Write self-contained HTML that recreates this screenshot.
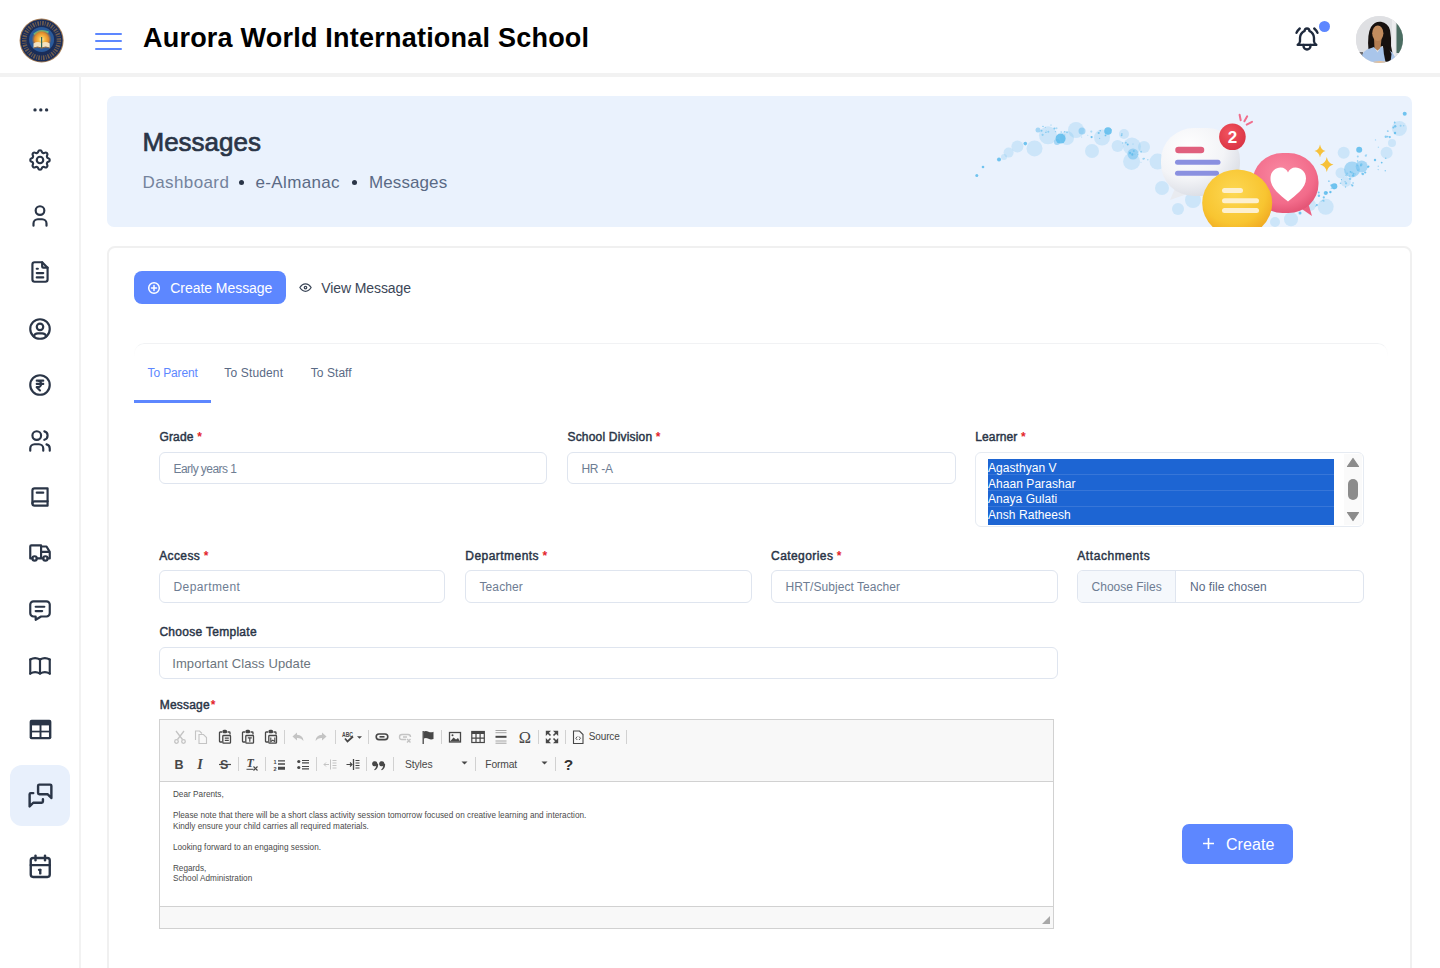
<!DOCTYPE html>
<html><head><meta charset="utf-8">
<style>
*{box-sizing:border-box;margin:0;padding:0}
html,body{width:1440px;height:968px;overflow:hidden;background:#fff;font-family:"Liberation Sans",sans-serif;color:#2a3547}
.abs{position:absolute}
#hdr{position:absolute;left:0;top:0;width:1440px;height:77px;background:#fff;border-bottom:4px solid #f2f2f2}
#side{position:absolute;left:0;top:77px;width:81px;height:891px;background:#fff;border-right:2px solid #f2f2f2}
.ic{position:absolute;left:28px;width:24px;height:24px}
.ic svg{display:block}
#banner{position:absolute;left:107px;top:96px;width:1305px;height:131px;background:#eaf2fd;border-radius:7px;overflow:hidden}
#card{position:absolute;left:107px;top:246px;width:1305px;height:760px;border:2px solid #f0f0f0;border-radius:8px;background:#fff}
.lbl{position:absolute;font-size:12px;font-weight:700;color:#2a3547;white-space:nowrap}
.t i{font-style:normal;color:#e3242b;margin-left:3px}
.inp{position:absolute;height:32px;border:1px solid #dfe5ef;border-radius:6px;background:#fff;font-size:12px;color:#6e7d93;padding-left:13px;line-height:30px;white-space:nowrap}
.t{position:absolute;white-space:nowrap}
</style></head><body>

<div id="hdr">
  <!-- logo -->
  <svg class="abs" style="left:19px;top:18px" width="46" height="46" viewBox="0 0 46 46">
    <defs>
      <radialGradient id="sun" cx="50%" cy="55%" r="50%">
        <stop offset="0" stop-color="#fff0c0"/>
        <stop offset="0.3" stop-color="#f9c04a"/>
        <stop offset="0.7" stop-color="#e08a2a"/>
        <stop offset="1" stop-color="#c0702a" stop-opacity="0"/>
      </radialGradient>
    </defs>
    <circle cx="22.6" cy="22.5" r="22" fill="#a27b55"/>
    <circle cx="22.6" cy="22.5" r="21" fill="#1a2d58"/>
    <circle cx="22.6" cy="22.5" r="17.3" fill="none" stroke="#86694c" stroke-width="4.5" stroke-dasharray="1.6 1.1 0.8 1.3" opacity=".8"/>
    <circle cx="22.6" cy="21.5" r="12.5" fill="#2a5a9a"/>
    <path d="M15 16.5 Q21 10.5 29.5 14.5" fill="none" stroke="#46c49a" stroke-width="2"/>
    <circle cx="22.6" cy="20.5" r="10" fill="url(#sun)"/>
    <path d="M14.5 25.5 Q18.5 23 22.6 25 Q26.7 23 30.7 25.5 L30.7 30 Q26.7 28 22.6 30 Q18.5 28 14.5 30Z" fill="#f3e2bf"/>
    <path d="M22.6 19v11" stroke="#2d6a5a" stroke-width="1.2"/>
    <path d="M14.5 30 Q18.5 28 22.6 30 Q26.7 28 30.7 30" fill="none" stroke="#8a6a4a" stroke-width="1"/>
  </svg>
  <!-- hamburger -->
  <div class="abs" style="left:95px;top:33px;width:27px;height:2px;background:#5d87ff;border-radius:1px"></div>
  <div class="abs" style="left:95px;top:40.4px;width:27px;height:2px;background:#5d87ff;border-radius:1px"></div>
  <div class="abs" style="left:95px;top:48.2px;width:27px;height:2px;background:#5d87ff;border-radius:1px"></div>
  <div class="t" style="left:143px;top:23px;font-size:27px;font-weight:700;color:#000;letter-spacing:0.22px;line-height:30px">Aurora World International School</div>
  <!-- bell -->
  <svg class="abs" style="left:1293px;top:25px" width="28" height="28" viewBox="0 0 24 24" fill="none" stroke="#1f2a3d" stroke-width="2" stroke-linecap="round" stroke-linejoin="round">
    <path d="M10 5a2 2 0 1 1 4 0a7 7 0 0 1 4 6v3a4 4 0 0 0 2 3h-16a4 4 0 0 0 2-3v-3a7 7 0 0 1 4-6"/>
    <path d="M9 17v1a3 3 0 0 0 6 0v-1"/>
    <path d="M21 6.727a11.05 11.05 0 0 0-2.794-3.727"/>
    <path d="M3 6.727a11.05 11.05 0 0 1 2.792-3.727"/>
  </svg>
  <div class="abs" style="left:1319px;top:21px;width:11px;height:11px;border-radius:50%;background:#5d87ff"></div>
  <!-- avatar -->
  <div class="abs" style="left:1355.5px;top:16px;width:47.5px;height:47px;border-radius:50%;overflow:hidden;background:#dfe0e3">
    <svg width="48" height="48" viewBox="0 0 48 48">
      <rect x="0" y="0" width="48" height="48" fill="#dfe0e3"/>
      <rect x="36" y="0" width="3.5" height="48" fill="#ececee"/>
      <rect x="40.5" y="7" width="8" height="30" fill="#4b6d62"/>
      <rect x="0" y="36" width="7" height="7" fill="#6d6d70"/>
      <path d="M12.5 34 Q11 18 15 11 Q19 5 25 5.8 Q32 7 34 14 Q35.5 22 35 30 Q37 36 36 42 L29 44 L27 30 Z" fill="#17110f"/>
      <path d="M18 23 L25.5 23 L24.5 32 L21.5 34.5 L18.5 32Z" fill="#b37d52"/>
      <path d="M4 48 Q5 37 11 33.5 L18 31 L21.5 36.5 L25 31 L29 32 Q38 34 41.5 48Z" fill="#a9c5ea"/>
      <path d="M27 29 Q33 30 35.5 38 L34.5 46 L29.5 46 Q27.5 38 27 29Z" fill="#17110f"/>
      <ellipse cx="21.8" cy="17.3" rx="5.6" ry="7.8" fill="#c28c5e"/>
      <path d="M14 46.5 Q24 43.5 34 46.5 V48 H14Z" fill="#e6c19a"/>
    </svg>
  </div>
</div>

<div id="side"></div>
<div id="sideicons">
<div class="abs" style="left:10px;top:765px;width:60px;height:61px;border-radius:12px;background:#e8f0fc"></div>
<svg class="abs" style="left:27px;top:96.6px" width="26" height="26" viewBox="0 0 24 24" fill="none" stroke="#2a3547" stroke-width="2" stroke-linecap="round" stroke-linejoin="round"><g fill="#2a3547" stroke="none"><circle cx="7.4" cy="11.9" r="1.55"/><circle cx="12.75" cy="11.9" r="1.55"/><circle cx="18.1" cy="11.9" r="1.55"/></g></svg>
<svg class="abs" style="left:27px;top:146.5px" width="26" height="26" viewBox="0 0 24 24" fill="none" stroke="#2a3547" stroke-width="2" stroke-linecap="round" stroke-linejoin="round"><path d="M10.325 4.317c.426 -1.756 2.924 -1.756 3.35 0a1.724 1.724 0 0 0 2.573 1.066c1.543 -.94 3.31 .826 2.37 2.37a1.724 1.724 0 0 0 1.065 2.572c1.756 .426 1.756 2.924 0 3.35a1.724 1.724 0 0 0 -1.066 2.573c.94 1.543 -.826 3.31 -2.37 2.37a1.724 1.724 0 0 0 -2.572 1.065c-.426 1.756 -2.924 1.756 -3.35 0a1.724 1.724 0 0 0 -2.573 -1.066c-1.543 .94 -3.31 -.826 -2.37 -2.37a1.724 1.724 0 0 0 -1.065 -2.572c-1.756 -.426 -1.756 -2.924 0 -3.35a1.724 1.724 0 0 0 1.066 -2.573c-.94 -1.543 .826 -3.31 2.37 -2.37c1 .608 2.296 .07 2.572 -1.065z"/><circle cx="12" cy="12" r="3"/></svg>
<svg class="abs" style="left:27px;top:203.0px" width="26" height="26" viewBox="0 0 24 24" fill="none" stroke="#2a3547" stroke-width="2" stroke-linecap="round" stroke-linejoin="round"><path d="M8 7a4 4 0 1 0 8 0a4 4 0 0 0 -8 0"/><path d="M6 21v-2a4 4 0 0 1 4 -4h4a4 4 0 0 1 4 4v2"/></svg>
<svg class="abs" style="left:27px;top:259.0px" width="26" height="26" viewBox="0 0 24 24" fill="none" stroke="#2a3547" stroke-width="2" stroke-linecap="round" stroke-linejoin="round"><path d="M14 3v4a1 1 0 0 0 1 1h4"/><path d="M17 21h-10a2 2 0 0 1 -2 -2v-14a2 2 0 0 1 2 -2h7l5 5v11a2 2 0 0 1 -2 2z"/><path d="M9 9l1 0"/><path d="M9 13l6 0"/><path d="M9 17l6 0"/></svg>
<svg class="abs" style="left:27px;top:315.5px" width="26" height="26" viewBox="0 0 24 24" fill="none" stroke="#2a3547" stroke-width="2" stroke-linecap="round" stroke-linejoin="round"><circle cx="12" cy="12" r="9"/><circle cx="12" cy="10" r="3"/><path d="M6.168 18.849a4 4 0 0 1 3.832 -2.849h4a4 4 0 0 1 3.834 2.855"/></svg>
<svg class="abs" style="left:27px;top:372.0px" width="26" height="26" viewBox="0 0 24 24" fill="none" stroke="#2a3547" stroke-width="2" stroke-linecap="round" stroke-linejoin="round"><circle cx="12" cy="12" r="9"/><path d="M15 8h-6h1a3 3 0 0 1 0 6h-1l3 3"/><path d="M9 11h6"/></svg>
<svg class="abs" style="left:27px;top:428.0px" width="26" height="26" viewBox="0 0 24 24" fill="none" stroke="#2a3547" stroke-width="2" stroke-linecap="round" stroke-linejoin="round"><path d="M5 7a4 4 0 1 0 8 0a4 4 0 1 0 -8 0"/><path d="M3 21v-2a4 4 0 0 1 4 -4h4a4 4 0 0 1 4 4v2"/><path d="M16 3.13a4 4 0 0 1 0 7.75"/><path d="M21 21v-2a4 4 0 0 0 -3 -3.85"/></svg>
<svg class="abs" style="left:27px;top:484.2px" width="26" height="26" viewBox="0 0 24 24" fill="none" stroke="#2a3547" stroke-width="2" stroke-linecap="round" stroke-linejoin="round"><path d="M19 4v16h-12a2 2 0 0 1 -2 -2v-12a2 2 0 0 1 2 -2h12z"/><path d="M19 16h-12a2 2 0 0 0 -2 2"/><path d="M9 8h6"/></svg>
<svg class="abs" style="left:27px;top:540.4px" width="26" height="26" viewBox="0 0 24 24" fill="none" stroke="#2a3547" stroke-width="2" stroke-linecap="round" stroke-linejoin="round"><path d="M5 17a2 2 0 1 0 4 0a2 2 0 1 0 -4 0"/><path d="M15 17a2 2 0 1 0 4 0a2 2 0 1 0 -4 0"/><path d="M5 17h-2v-11a1 1 0 0 1 1 -1h9v12m-4 0h6m4 0h2v-6h-8m0 -5h5l3 5"/></svg>
<svg class="abs" style="left:27px;top:597.0px" width="26" height="26" viewBox="0 0 24 24" fill="none" stroke="#2a3547" stroke-width="2" stroke-linecap="round" stroke-linejoin="round"><path d="M8 9h8"/><path d="M8 13h6"/><path d="M18 4a3 3 0 0 1 3 3v8a3 3 0 0 1 -3 3h-5l-5 3v-3h-2a3 3 0 0 1 -3 -3v-8a3 3 0 0 1 3 -3h12z"/></svg>
<svg class="abs" style="left:27px;top:653.3px" width="26" height="26" viewBox="0 0 24 24" fill="none" stroke="#2a3547" stroke-width="2" stroke-linecap="round" stroke-linejoin="round"><path d="M3 19a9 9 0 0 1 9 0a9 9 0 0 1 9 0"/><path d="M3 6a9 9 0 0 1 9 0a9 9 0 0 1 9 0"/><path d="M3 6l0 13"/><path d="M12 6l0 13"/><path d="M21 6l0 13"/></svg>
<svg class="abs" style="left:26px;top:715px" width="29" height="29" viewBox="0 0 24 24"><rect x="3" y="4" width="18" height="16" rx="1.6" fill="#2a3547"/><rect x="5" y="8.6" width="6.2" height="4.4" fill="#fff"/><rect x="12.8" y="8.6" width="6.2" height="4.4" fill="#fff"/><rect x="5" y="14.4" width="6.2" height="3.8" fill="#fff"/><rect x="12.8" y="14.4" width="6.2" height="3.8" fill="#fff"/></svg>
<svg class="abs" style="left:25.5px;top:780.5px" width="29" height="29" viewBox="0 0 24 24" fill="none" stroke="#2a3547" stroke-width="2" stroke-linecap="round" stroke-linejoin="round"><path d="M21 14l-3 -3h-7a1 1 0 0 1 -1 -1v-6a1 1 0 0 1 1 -1h9a1 1 0 0 1 1 1v10"/><path d="M14 15v2a1 1 0 0 1 -1 1h-7l-3 3v-10a1 1 0 0 1 1 -1h2"/></svg>
<svg class="abs" style="left:25.8px;top:851.5px" width="28.5" height="28.5" viewBox="0 0 24 24" fill="none" stroke="#2a3547" stroke-width="2" stroke-linecap="round" stroke-linejoin="round"><path d="M4 7a2 2 0 0 1 2 -2h12a2 2 0 0 1 2 2v12a2 2 0 0 1 -2 2h-12a2 2 0 0 1 -2 -2v-12z"/><path d="M16 3v4"/><path d="M8 3v4"/><path d="M4 11h16"/><path d="M11 15h1"/><path d="M12 15v3"/></svg>
</div>

<div id="banner">
  <div class="t" style="left:35.5px;top:31px;font-size:26px;font-weight:400;color:#2a3547;line-height:30px;-webkit-text-stroke:0.7px #2a3547">Messages</div>
  <div class="t" style="left:35.5px;top:75.5px;font-size:17px;color:#74839c;line-height:22px;letter-spacing:0.4px">Dashboard</div>
  <div class="abs" style="left:131.8px;top:84px;width:5px;height:5px;border-radius:50%;background:#2a3547"></div>
  <div class="t" style="left:148.5px;top:75.5px;font-size:17px;color:#5a6a85;line-height:22px;letter-spacing:0.35px">e-Almanac</div>
  <div class="abs" style="left:245.2px;top:84px;width:5px;height:5px;border-radius:50%;background:#2a3547"></div>
  <div class="t" style="left:262px;top:75.5px;font-size:17px;color:#5a6a85;line-height:22px;letter-spacing:0.1px">Messages</div>
  <div id="illus"><svg class="abs" style="left:833px;top:0px" width="472" height="131" viewBox="940 96 472 131">
<defs>
 <radialGradient id="wg" cx="35%" cy="30%" r="75%"><stop offset="0" stop-color="#ffffff"/><stop offset=".6" stop-color="#f3f4f7"/><stop offset="1" stop-color="#d9dce4"/></radialGradient>
 <radialGradient id="yg" cx="45%" cy="35%" r="70%"><stop offset="0" stop-color="#fdd853"/><stop offset=".65" stop-color="#f8c531"/><stop offset="1" stop-color="#eea21f"/></radialGradient>
 <radialGradient id="pg" cx="45%" cy="35%" r="70%"><stop offset="0" stop-color="#f98aa3"/><stop offset=".7" stop-color="#f26b8a"/><stop offset="1" stop-color="#e04f70"/></radialGradient>
 <radialGradient id="rg" cx="40%" cy="35%" r="70%"><stop offset="0" stop-color="#f2545f"/><stop offset="1" stop-color="#d93343"/></radialGradient>
</defs>
<circle cx="1008.6" cy="152.6" r="5" fill="#7cc6f0" opacity=".28"/>
<circle cx="1017.4" cy="146.6" r="6" fill="#7cc6f0" opacity=".28"/>
<circle cx="1034.5" cy="148.4" r="8" fill="#7cc6f0" opacity=".28"/>
<circle cx="1048" cy="135.3" r="9" fill="#7cc6f0" opacity=".28"/>
<circle cx="1067" cy="138" r="7" fill="#7cc6f0" opacity=".28"/>
<circle cx="1076" cy="130" r="8" fill="#7cc6f0" opacity=".28"/>
<circle cx="1092" cy="151" r="7" fill="#7cc6f0" opacity=".28"/>
<circle cx="1102" cy="137.6" r="8" fill="#7cc6f0" opacity=".28"/>
<circle cx="1124" cy="134" r="5" fill="#7cc6f0" opacity=".28"/>
<circle cx="1117.6" cy="146" r="6" fill="#7cc6f0" opacity=".28"/>
<circle cx="1132" cy="146.5" r="9" fill="#7cc6f0" opacity=".28"/>
<circle cx="1131.6" cy="161.6" r="8.5" fill="#7cc6f0" opacity=".28"/>
<circle cx="1157.6" cy="161.6" r="8" fill="#7cc6f0" opacity=".28"/>
<circle cx="1162" cy="188" r="7" fill="#7cc6f0" opacity=".28"/>
<circle cx="1144" cy="147" r="6" fill="#7cc6f0" opacity=".28"/>
<circle cx="1193" cy="200" r="8" fill="#7cc6f0" opacity=".28"/>
<circle cx="1291" cy="219.3" r="7" fill="#7cc6f0" opacity=".28"/>
<circle cx="1325.7" cy="206.8" r="8" fill="#7cc6f0" opacity=".28"/>
<circle cx="1343.7" cy="152.8" r="6" fill="#7cc6f0" opacity=".28"/>
<circle cx="1341" cy="172.9" r="5.5" fill="#7cc6f0" opacity=".28"/>
<circle cx="1345.8" cy="181.9" r="5" fill="#7cc6f0" opacity=".28"/>
<circle cx="1386.6" cy="152.8" r="6" fill="#7cc6f0" opacity=".28"/>
<circle cx="1392" cy="143" r="4" fill="#7cc6f0" opacity=".28"/>
<circle cx="1399.4" cy="128.5" r="7.5" fill="#7cc6f0" opacity=".28"/>
<circle cx="1004" cy="157" r="3" fill="#7cc6f0" opacity=".28"/>
<circle cx="1178" cy="209" r="6" fill="#7cc6f0" opacity=".28"/>
<circle cx="1275" cy="222" r="5" fill="#7cc6f0" opacity=".28"/>
<circle cx="1310" cy="205" r="6" fill="#7cc6f0" opacity=".28"/>
<circle cx="1133" cy="154" r="5.5" fill="#6ec0ee" opacity=".55"/>
<circle cx="1352" cy="169.4" r="8" fill="#6ec0ee" opacity=".55"/>
<circle cx="1361.7" cy="166.6" r="6" fill="#6ec0ee" opacity=".55"/>
<circle cx="1082" cy="131" r="3.5" fill="#6ec0ee" opacity=".55"/>
<circle cx="1038" cy="130" r="2.5" fill="#6ec0ee" opacity=".55"/>
<circle cx="1057" cy="142" r="3" fill="#6ec0ee" opacity=".55"/>
<circle cx="1060.6" cy="138.6" r="5" fill="#5bbbec" opacity=".85"/>
<circle cx="1108" cy="131" r="3.8" fill="#5bbbec" opacity=".85"/>
<circle cx="1334.3" cy="186.3" r="3" fill="#5bbbec" opacity=".85"/>
<circle cx="1359.2" cy="149.7" r="3" fill="#5bbbec" opacity=".85"/>
<circle cx="1404.7" cy="113.7" r="2" fill="#5bbbec" opacity=".85"/>
<circle cx="1025.3" cy="143.6" r="1.8" fill="#5bbbec" opacity=".85"/>
<circle cx="999" cy="159.6" r="2" fill="#5bbbec" opacity=".85"/>
<circle cx="976.8" cy="175.6" r="1.5" fill="#5bbbec" opacity=".85"/>
<circle cx="983" cy="167" r="1.3" fill="#5bbbec" opacity=".85"/>
<circle cx="1325.7" cy="193" r="2" fill="#5bbbec" opacity=".85"/>
<circle cx="1300" cy="213" r="1.5" fill="#5bbbec" opacity=".85"/>
<circle cx="1375" cy="160" r="1.2" fill="#5bbbec" opacity=".85"/>
<circle cx="1395" cy="133" r="1.2" fill="#5bbbec" opacity=".85"/>
<circle cx="1345.1" cy="181.7" r="0.6" fill="#5bbbec" opacity="0.67"/>
<circle cx="1349.4" cy="175.9" r="0.5" fill="#5bbbec" opacity="0.62"/>
<circle cx="1323.6" cy="200.9" r="1.1" fill="#5bbbec" opacity="0.46"/>
<circle cx="1328.9" cy="181.2" r="0.9" fill="#5bbbec" opacity="0.60"/>
<circle cx="1403.7" cy="125.7" r="0.7" fill="#5bbbec" opacity="0.47"/>
<circle cx="1323.0" cy="200.4" r="0.6" fill="#5bbbec" opacity="0.69"/>
<circle cx="1366.7" cy="154.7" r="0.5" fill="#5bbbec" opacity="0.43"/>
<circle cx="1331.2" cy="185.0" r="0.7" fill="#5bbbec" opacity="0.69"/>
<circle cx="1351.9" cy="172.5" r="1.0" fill="#5bbbec" opacity="0.52"/>
<circle cx="1357.8" cy="156.4" r="1.0" fill="#5bbbec" opacity="0.54"/>
<circle cx="1400.6" cy="125.8" r="1.0" fill="#5bbbec" opacity="0.48"/>
<circle cx="1360.9" cy="165.5" r="1.0" fill="#5bbbec" opacity="0.69"/>
<circle cx="1387.6" cy="136.6" r="0.9" fill="#5bbbec" opacity="0.69"/>
<circle cx="1357.6" cy="161.0" r="0.8" fill="#5bbbec" opacity="0.73"/>
<circle cx="1318.9" cy="195.8" r="1.2" fill="#5bbbec" opacity="0.81"/>
<circle cx="1335.8" cy="184.3" r="0.5" fill="#5bbbec" opacity="0.63"/>
<circle cx="1330.1" cy="191.8" r="1.0" fill="#5bbbec" opacity="0.46"/>
<circle cx="1331.3" cy="188.3" r="0.6" fill="#5bbbec" opacity="0.62"/>
<circle cx="1365.8" cy="155.7" r="1.1" fill="#5bbbec" opacity="0.54"/>
<circle cx="1346.4" cy="175.4" r="1.2" fill="#5bbbec" opacity="0.48"/>
<circle cx="1330.2" cy="192.5" r="0.8" fill="#5bbbec" opacity="0.69"/>
<circle cx="1340.5" cy="183.3" r="0.8" fill="#5bbbec" opacity="0.68"/>
<circle cx="1394.7" cy="122.5" r="0.9" fill="#5bbbec" opacity="0.74"/>
<circle cx="1323.8" cy="197.4" r="1.1" fill="#5bbbec" opacity="0.80"/>
<circle cx="1347.2" cy="173.3" r="0.9" fill="#5bbbec" opacity="0.43"/>
<circle cx="1321.2" cy="201.1" r="0.7" fill="#5bbbec" opacity="0.43"/>
<circle cx="1315.8" cy="206.1" r="0.8" fill="#5bbbec" opacity="0.41"/>
<circle cx="1388.0" cy="131.3" r="0.7" fill="#5bbbec" opacity="0.57"/>
<circle cx="1350.1" cy="178.8" r="1.2" fill="#5bbbec" opacity="0.63"/>
<circle cx="1357.3" cy="165.6" r="0.7" fill="#5bbbec" opacity="0.53"/>
<circle cx="1385.8" cy="136.8" r="1.2" fill="#5bbbec" opacity="0.66"/>
<circle cx="1326.8" cy="192.6" r="0.9" fill="#5bbbec" opacity="0.89"/>
<circle cx="1387.6" cy="131.1" r="0.8" fill="#5bbbec" opacity="0.48"/>
<circle cx="1375.5" cy="139.9" r="0.7" fill="#5bbbec" opacity="0.51"/>
<circle cx="1389.8" cy="137.1" r="1.1" fill="#5bbbec" opacity="0.81"/>
<circle cx="1378.4" cy="147.2" r="0.7" fill="#5bbbec" opacity="0.41"/>
<circle cx="1316.9" cy="205.0" r="1.0" fill="#5bbbec" opacity="0.88"/>
<circle cx="1361.3" cy="164.4" r="1.2" fill="#5bbbec" opacity="0.58"/>
<circle cx="1334.0" cy="188.7" r="0.6" fill="#5bbbec" opacity="0.71"/>
<circle cx="1393.4" cy="127.4" r="1.0" fill="#5bbbec" opacity="0.80"/>
<circle cx="1318.7" cy="192.4" r="1.0" fill="#5bbbec" opacity="0.78"/>
<circle cx="1357.9" cy="170.1" r="0.7" fill="#5bbbec" opacity="0.80"/>
<circle cx="1395.2" cy="126.2" r="1.2" fill="#5bbbec" opacity="0.76"/>
<circle cx="1330.6" cy="192.1" r="1.1" fill="#5bbbec" opacity="0.80"/>
<circle cx="1331.3" cy="185.4" r="1.0" fill="#5bbbec" opacity="0.58"/>
<circle cx="1362.9" cy="174.0" r="1.2" fill="#5bbbec" opacity="0.72"/>
<circle cx="1365.2" cy="172.5" r="1.1" fill="#5bbbec" opacity="0.81"/>
<circle cx="1345.5" cy="187.0" r="0.7" fill="#5bbbec" opacity="0.69"/>
<circle cx="1346.1" cy="183.3" r="1.1" fill="#5bbbec" opacity="0.58"/>
<circle cx="1350.4" cy="171.9" r="0.8" fill="#5bbbec" opacity="0.86"/>
<circle cx="1355.3" cy="174.0" r="0.5" fill="#5bbbec" opacity="0.62"/>
<circle cx="1351.3" cy="184.7" r="0.6" fill="#5bbbec" opacity="0.64"/>
<circle cx="1367.9" cy="167.0" r="0.9" fill="#5bbbec" opacity="0.68"/>
<circle cx="1378.2" cy="169.6" r="0.7" fill="#5bbbec" opacity="0.54"/>
<circle cx="1368.5" cy="166.6" r="1.0" fill="#5bbbec" opacity="0.86"/>
<circle cx="1353.6" cy="173.6" r="0.9" fill="#5bbbec" opacity="0.75"/>
<circle cx="1353.2" cy="175.5" r="1.2" fill="#5bbbec" opacity="0.75"/>
<circle cx="1381.7" cy="162.6" r="0.9" fill="#5bbbec" opacity="0.87"/>
<circle cx="1378.3" cy="166.3" r="0.8" fill="#5bbbec" opacity="0.44"/>
<circle cx="1352.4" cy="185.4" r="1.0" fill="#5bbbec" opacity="0.85"/>
<circle cx="1341.5" cy="179.6" r="0.6" fill="#5bbbec" opacity="0.84"/>
<circle cx="1385.3" cy="170.7" r="0.8" fill="#5bbbec" opacity="0.64"/>
<circle cx="1385.7" cy="158.2" r="0.8" fill="#5bbbec" opacity="0.66"/>
<circle cx="1353.1" cy="183.1" r="1.0" fill="#5bbbec" opacity="0.41"/>
<circle cx="1362.0" cy="173.7" r="0.7" fill="#5bbbec" opacity="0.71"/>
<circle cx="1091.6" cy="137.1" r="1.1" fill="#5bbbec" opacity="0.89"/>
<circle cx="1048.3" cy="131.7" r="1.0" fill="#5bbbec" opacity="0.54"/>
<circle cx="1042.6" cy="134.8" r="1.1" fill="#5bbbec" opacity="0.53"/>
<circle cx="1056.5" cy="128.2" r="1.0" fill="#5bbbec" opacity="0.44"/>
<circle cx="1043.0" cy="126.4" r="0.6" fill="#5bbbec" opacity="0.87"/>
<circle cx="1091.3" cy="131.6" r="1.1" fill="#5bbbec" opacity="0.43"/>
<circle cx="1105.5" cy="135.4" r="0.9" fill="#5bbbec" opacity="0.86"/>
<circle cx="1064.8" cy="134.9" r="0.7" fill="#5bbbec" opacity="0.45"/>
<circle cx="1055.5" cy="131.6" r="0.7" fill="#5bbbec" opacity="0.55"/>
<circle cx="1099.6" cy="138.4" r="0.6" fill="#5bbbec" opacity="0.57"/>
<circle cx="1041.5" cy="130.8" r="1.0" fill="#5bbbec" opacity="0.68"/>
<circle cx="1045.9" cy="132.4" r="0.6" fill="#5bbbec" opacity="0.81"/>
<circle cx="1067.0" cy="132.4" r="0.8" fill="#5bbbec" opacity="0.65"/>
<circle cx="1098.7" cy="133.0" r="1.1" fill="#5bbbec" opacity="0.75"/>
<circle cx="1087.8" cy="135.3" r="0.5" fill="#5bbbec" opacity="0.46"/>
<circle cx="1045.5" cy="127.3" r="0.6" fill="#5bbbec" opacity="0.44"/>
<circle cx="1111.4" cy="129.9" r="0.7" fill="#5bbbec" opacity="0.52"/>
<circle cx="1061.2" cy="132.1" r="0.8" fill="#5bbbec" opacity="0.53"/>
<circle cx="1121.9" cy="133.9" r="0.7" fill="#5bbbec" opacity="0.88"/>
<circle cx="1064.6" cy="131.7" r="0.8" fill="#5bbbec" opacity="0.64"/>
<circle cx="1081.7" cy="137.0" r="0.5" fill="#5bbbec" opacity="0.53"/>
<circle cx="1046.2" cy="131.1" r="0.5" fill="#5bbbec" opacity="0.55"/>
<circle cx="1054.4" cy="128.6" r="1.0" fill="#5bbbec" opacity="0.73"/>
<circle cx="1100.2" cy="130.8" r="0.7" fill="#5bbbec" opacity="0.89"/>
<circle cx="1051.0" cy="125.1" r="0.5" fill="#5bbbec" opacity="0.82"/>
<circle cx="1143.4" cy="158.8" r="1.1" fill="#5bbbec" opacity="0.47"/>
<circle cx="1130.0" cy="152.9" r="1.1" fill="#5bbbec" opacity="0.81"/>
<circle cx="1141.1" cy="151.8" r="1.0" fill="#5bbbec" opacity="0.51"/>
<circle cx="1122.8" cy="142.9" r="0.6" fill="#5bbbec" opacity="0.82"/>
<circle cx="1133.8" cy="150.9" r="1.0" fill="#5bbbec" opacity="0.64"/>
<circle cx="1121.6" cy="135.3" r="0.9" fill="#5bbbec" opacity="0.67"/>
<circle cx="1144.3" cy="158.5" r="0.7" fill="#5bbbec" opacity="0.44"/>
<circle cx="1127.7" cy="144.6" r="1.0" fill="#5bbbec" opacity="0.89"/>
<circle cx="1132.3" cy="154.7" r="1.0" fill="#5bbbec" opacity="0.78"/>
<circle cx="1137.8" cy="154.5" r="0.6" fill="#5bbbec" opacity="0.53"/>
<circle cx="1141.0" cy="162.2" r="0.5" fill="#5bbbec" opacity="0.43"/>
<circle cx="1125.9" cy="142.7" r="1.0" fill="#5bbbec" opacity="0.55"/>
<circle cx="1132.2" cy="153.7" r="0.6" fill="#5bbbec" opacity="0.85"/>
<circle cx="1133.0" cy="144.0" r="0.5" fill="#5bbbec" opacity="0.63"/>
<circle cx="1147.8" cy="159.8" r="0.7" fill="#5bbbec" opacity="0.50"/>
<!-- white bubble -->
<path d="M1176 186 L1170 200 L1190 193Z" fill="#e9ebf0"/>
<rect x="1161" y="128" width="79" height="68" rx="33" ry="32" fill="url(#wg)"/>
<path d="M1178.5 150h22.5" stroke="#e0607e" stroke-width="6.5" stroke-linecap="round"/>
<path d="M1177.5 162.2h40.5" stroke="#8a90e0" stroke-width="5" stroke-linecap="round"/>
<path d="M1177.5 173.2h39" stroke="#8a90e0" stroke-width="5" stroke-linecap="round"/>
<!-- badge -->
<circle cx="1232.4" cy="136.8" r="13.3" fill="url(#rg)"/>
<text x="1232.4" y="143" text-anchor="middle" font-family="Liberation Sans" font-weight="700" font-size="17" fill="#fff">2</text>
<path d="M1239.6 114.8l1.1 5.4M1247.2 116.3l-2.8 5M1252 121.8l-5.3 2.8" stroke="#f06f8d" stroke-width="2" stroke-linecap="round"/>
<!-- pink bubble -->
<path d="M1296 205 L1312 216 L1306 196Z" fill="#ec5f80"/>
<rect x="1252.5" y="153" width="66" height="60" rx="30" ry="29" fill="url(#pg)"/>
<path d="M1288 201.5 C1280 195 1270.5 188 1270.5 178.5 C1270.5 171 1276 167.5 1280.5 167.5 C1284 167.5 1287 169.5 1288 172.5 C1289 169.5 1292 167.5 1295.5 167.5 C1300 167.5 1306 171 1306 178.5 C1306 188 1296 195 1288 201.5Z" fill="#fff"/>
<!-- yellow bubble -->
<ellipse cx="1237.2" cy="203" rx="35" ry="33.5" fill="url(#yg)"/>
<path d="M1224.5 190.5h16" stroke="#fdf0cf" stroke-width="5" stroke-linecap="round"/>
<path d="M1224.5 200.8h32" stroke="#fdf0cf" stroke-width="5" stroke-linecap="round"/>
<path d="M1224.5 210.4h32" stroke="#fdf0cf" stroke-width="5" stroke-linecap="round"/>
<!-- sparkles -->
<path d="M1320 144.5 Q1321 150 1325.5 151 Q1321 152 1320 157.5 Q1319 152 1314.5 151 Q1319 150 1320 144.5Z" fill="#f6c13a"/>
<path d="M1326.8 157 Q1328 163.5 1333.5 164.6 Q1328 165.8 1326.8 172 Q1325.6 165.8 1320 164.6 Q1325.6 163.5 1326.8 157Z" fill="#f6c13a"/>
</svg></div>
</div>

<div id="card"></div>
<div class="abs" style="left:134px;top:271px;width:152px;height:33px;background:#5d87ff;border-radius:8px"></div>
<svg class="abs" style="left:147px;top:281px" width="14" height="14" viewBox="0 0 14 14" ><circle cx="7" cy="7" r="5.3" fill="none" stroke="#fff" stroke-width="1.5"/><path d="M7 4.5v5M4.5 7h5" stroke="#fff" stroke-width="1.5" stroke-linecap="round"/></svg>
<div class="t" style="left:170.3px;top:280.7px;font-size:14px;line-height:14px;color:#fff;font-weight:400;letter-spacing:-0.05px;">Create Message</div>
<svg class="abs" style="left:298px;top:279.5px" width="15" height="15" viewBox="0 0 24 24" fill="none" stroke="#3b4657" stroke-width="2" stroke-linecap="round" stroke-linejoin="round"><path d="M10 12a2 2 0 1 0 4 0a2 2 0 0 0 -4 0"/><path d="M21 12c-2.4 4 -5.4 6 -9 6c-3.6 0 -6.6 -2 -9 -6c2.4 -4 5.4 -6 9 -6c3.6 0 6.6 2 9 6"/></svg>
<div class="t" style="left:321.3px;top:280.7px;font-size:14px;line-height:14px;color:#3b4657;font-weight:400;letter-spacing:-0.1px;">View Message</div>
<div class="abs" style="left:134px;top:343px;width:1254px;height:14px;border-top:1px solid #f0f2f4;border-left:1px solid #f7f8f9;border-right:1px solid #f7f8f9;border-radius:10px 10px 0 0;-webkit-mask-image:linear-gradient(#000,transparent)"></div>
<div class="t" style="left:147.6px;top:366.8px;font-size:12px;line-height:12px;color:#5d87ff;font-weight:400;letter-spacing:-0.15px;">To Parent</div>
<div class="t" style="left:224.3px;top:366.8px;font-size:12px;line-height:12px;color:#5a6a85;font-weight:400;letter-spacing:0.15px;">To Student</div>
<div class="t" style="left:310.8px;top:366.8px;font-size:12px;line-height:12px;color:#5a6a85;font-weight:400;letter-spacing:0.05px;">To Staff</div>
<div class="abs" style="left:134px;top:400px;width:77px;height:2.5px;background:#5d87ff"></div>
<div class="t" style="left:159.4px;top:430.6px;font-size:12px;line-height:12px;color:#2a3547;font-weight:400;letter-spacing:0.2px;-webkit-text-stroke:0.45px #2a3547;">Grade<i style="margin-left:3.5px;-webkit-text-stroke:0;font-weight:700">*</i></div>
<div class="t" style="left:567.5px;top:430.6px;font-size:12px;line-height:12px;color:#2a3547;font-weight:400;letter-spacing:0.18px;-webkit-text-stroke:0.45px #2a3547;">School Division<i style="margin-left:3.5px;-webkit-text-stroke:0;font-weight:700">*</i></div>
<div class="t" style="left:975.3px;top:430.6px;font-size:12px;line-height:12px;color:#2a3547;font-weight:400;letter-spacing:0.11px;-webkit-text-stroke:0.45px #2a3547;">Learner<i style="margin-left:3.5px;-webkit-text-stroke:0;font-weight:700">*</i></div>
<div class="abs" style="left:159px;top:452px;width:388px;height:32px;border:1px solid #dfe5ef;border-radius:6px;background:#fff"></div>
<div class="t" style="left:173.5px;top:462.6px;font-size:12px;line-height:12px;color:#6e7d93;font-weight:400;letter-spacing:-0.55px;">Early years 1</div>
<div class="abs" style="left:567px;top:452px;width:389px;height:32px;border:1px solid #dfe5ef;border-radius:6px;background:#fff"></div>
<div class="t" style="left:581.5px;top:462.6px;font-size:12px;line-height:12px;color:#6e7d93;font-weight:400;letter-spacing:-0.3px;">HR -A</div>
<div class="abs" style="left:975px;top:452px;width:389px;height:75px;border:1px solid #e6ebf2;border-radius:6px;background:#fff;overflow:hidden"></div>
<div class="abs" style="left:988px;top:455px;width:346px;height:4px;background:#fff"></div>
<div class="abs" style="left:988px;top:459px;width:346px;height:66px;background:#1d65d3"></div>
<div class="abs" style="left:988px;top:474px;width:346px;height:1px;background:#3776d8"></div>
<div class="abs" style="left:988px;top:490px;width:346px;height:1px;background:#3776d8"></div>
<div class="abs" style="left:988px;top:506px;width:346px;height:1px;background:#3776d8"></div>
<div class="t" style="left:988.0px;top:462.1px;font-size:12px;line-height:12px;color:#fff;font-weight:400;letter-spacing:0.05px;">Agasthyan V</div>
<div class="t" style="left:988.0px;top:477.8px;font-size:12px;line-height:12px;color:#fff;font-weight:400;letter-spacing:0.05px;">Ahaan Parashar</div>
<div class="t" style="left:988.0px;top:492.8px;font-size:12px;line-height:12px;color:#fff;font-weight:400;letter-spacing:0.05px;">Anaya Gulati</div>
<div class="t" style="left:988.0px;top:508.6px;font-size:12px;line-height:12px;color:#fff;font-weight:400;letter-spacing:0.05px;">Ansh Ratheesh</div>
<div class="abs" style="left:1344px;top:454px;width:18px;height:71px;background:#fafafa"></div>
<svg class="abs" style="left:1346px;top:456px" width="14" height="66" viewBox="0 0 14 66" ><path d="M7 2.5L12.5 10.5H1.5Z" fill="#8c8c8c" stroke="#8c8c8c" stroke-width="1.2" stroke-linejoin="round"/><rect x="2" y="23" width="10" height="21" rx="5" fill="#8c8c8c"/><path d="M1.5 56.5H12.5L7 64.5Z" fill="#8c8c8c" stroke="#8c8c8c" stroke-width="1.2" stroke-linejoin="round"/></svg>
<div class="t" style="left:159.2px;top:549.8px;font-size:12px;line-height:12px;color:#2a3547;font-weight:400;letter-spacing:0.38px;-webkit-text-stroke:0.45px #2a3547;">Access<i style="margin-left:3.5px;-webkit-text-stroke:0;font-weight:700">*</i></div>
<div class="t" style="left:465.3px;top:549.8px;font-size:12px;line-height:12px;color:#2a3547;font-weight:400;letter-spacing:0.46px;-webkit-text-stroke:0.45px #2a3547;">Departments<i style="margin-left:3.5px;-webkit-text-stroke:0;font-weight:700">*</i></div>
<div class="t" style="left:771.1px;top:549.8px;font-size:12px;line-height:12px;color:#2a3547;font-weight:400;letter-spacing:0.42px;-webkit-text-stroke:0.45px #2a3547;">Categories<i style="margin-left:3.5px;-webkit-text-stroke:0;font-weight:700">*</i></div>
<div class="t" style="left:1077.3px;top:549.8px;font-size:12px;line-height:12px;color:#2a3547;font-weight:400;letter-spacing:0.57px;-webkit-text-stroke:0.45px #2a3547;">Attachments</div>
<div class="abs" style="left:159px;top:570px;width:286px;height:33px;border:1px solid #dfe5ef;border-radius:6px;background:#fff"></div>
<div class="t" style="left:173.5px;top:580.6px;font-size:12px;line-height:12px;color:#6e7d93;font-weight:400;letter-spacing:0.4px;">Department</div>
<div class="abs" style="left:465px;top:570px;width:287px;height:33px;border:1px solid #dfe5ef;border-radius:6px;background:#fff"></div>
<div class="t" style="left:479.5px;top:580.6px;font-size:12px;line-height:12px;color:#6e7d93;font-weight:400;letter-spacing:0.1px;">Teacher</div>
<div class="abs" style="left:771px;top:570px;width:287px;height:33px;border:1px solid #dfe5ef;border-radius:6px;background:#fff"></div>
<div class="t" style="left:785.5px;top:580.6px;font-size:12px;line-height:12px;color:#6e7d93;font-weight:400;letter-spacing:0.05px;">HRT/Subject Teacher</div>
<div class="abs" style="left:1077px;top:570px;width:287px;height:33px;border:1px solid #dfe5ef;border-radius:6px;background:#fff;overflow:hidden"></div>
<div class="abs" style="left:1078px;top:571px;width:98px;height:31px;background:#f5f8fc;border-right:1px solid #dfe5ef;border-radius:5px 0 0 5px"></div>
<div class="t" style="left:1091.6px;top:580.6px;font-size:12px;line-height:12px;color:#6e7d93;font-weight:400;letter-spacing:0px;">Choose Files</div>
<div class="t" style="left:1190.0px;top:580.6px;font-size:12px;line-height:12px;color:#5a6a85;font-weight:400;letter-spacing:0.05px;">No file chosen</div>
<div class="t" style="left:159.4px;top:625.8px;font-size:12px;line-height:12px;color:#2a3547;font-weight:400;letter-spacing:0.29px;-webkit-text-stroke:0.45px #2a3547;">Choose Template</div>
<div class="abs" style="left:159px;top:647px;width:899px;height:32px;border:1px solid #dfe5ef;border-radius:6px;background:#fff"></div>
<div class="t" style="left:172.2px;top:657.0px;font-size:13px;line-height:13px;color:#6c757d;font-weight:400;letter-spacing:0.1px;">Important Class Update</div>
<div class="t" style="left:159.8px;top:698.7px;font-size:12px;line-height:12px;color:#2a3547;font-weight:400;letter-spacing:0.19px;-webkit-text-stroke:0.45px #2a3547;">Message<i style="margin-left:1px;-webkit-text-stroke:0;font-weight:700">*</i></div>
<div class="abs" style="left:159px;top:719px;width:895px;height:210px;border:1px solid #d1d1d1;background:#fff"></div>
<div class="abs" style="left:160px;top:720px;width:893px;height:62px;background:#f8f8f8;border-bottom:1px solid #d1d1d1"></div>
<div class="abs" style="left:160px;top:906px;width:893px;height:22px;background:#f8f8f8;border-top:1px solid #d1d1d1"></div>
<svg class="abs" style="left:1041px;top:915px" width="10" height="10" viewBox="0 0 10 10" ><path d="M9 1V9H1Z" fill="#a8a8a8"/></svg>
<div class="abs" style="left:284px;top:730px;width:1px;height:14px;background:#d1d1d1"></div>
<div class="abs" style="left:335px;top:730px;width:1px;height:14px;background:#d1d1d1"></div>
<div class="abs" style="left:368px;top:730px;width:1px;height:14px;background:#d1d1d1"></div>
<div class="abs" style="left:441px;top:730px;width:1px;height:14px;background:#d1d1d1"></div>
<div class="abs" style="left:538px;top:730px;width:1px;height:14px;background:#d1d1d1"></div>
<div class="abs" style="left:565px;top:730px;width:1px;height:14px;background:#d1d1d1"></div>
<div class="abs" style="left:626px;top:730px;width:1px;height:14px;background:#d1d1d1"></div>
<div class="abs" style="left:238px;top:757px;width:1px;height:14px;background:#d1d1d1"></div>
<div class="abs" style="left:265px;top:757px;width:1px;height:14px;background:#d1d1d1"></div>
<div class="abs" style="left:316px;top:757px;width:1px;height:14px;background:#d1d1d1"></div>
<div class="abs" style="left:366px;top:757px;width:1px;height:14px;background:#d1d1d1"></div>
<div class="abs" style="left:393px;top:757px;width:1px;height:14px;background:#d1d1d1"></div>
<div class="abs" style="left:475px;top:757px;width:1px;height:14px;background:#d1d1d1"></div>
<div class="abs" style="left:555px;top:757px;width:1px;height:14px;background:#d1d1d1"></div>
<svg class="abs" style="left:172px;top:729px" width="16" height="16" viewBox="0 0 16 16" ><g fill="none" stroke="#c4c4c4" stroke-width="1.3"><path d="M4 2L10.5 10.5M12 2L5.5 10.5"/><circle cx="4.5" cy="12.5" r="1.8"/><circle cx="11.5" cy="12.5" r="1.8"/></g></svg>
<svg class="abs" style="left:193px;top:729px" width="16" height="16" viewBox="0 0 16 16" ><g fill="none" stroke="#c4c4c4" stroke-width="1.1"><path d="M2.5 11V2h4l2.5 2.5"/><path d="M6 14.5V5.5h4.5l3 3v6Z"/></g></svg>
<svg class="abs" style="left:217px;top:729px" width="16" height="16" viewBox="0 0 16 16" ><g fill="none" stroke="#474747" stroke-width="1.3"><path d="M5 3H3.2Q2.5 3 2.5 3.8V12.2Q2.5 13 3.2 13H5M10.5 3H12.3Q13 3 13 3.8V5.5"/><rect x="6" y="1.5" width="3.5" height="2.2" rx="1" fill="#474747"/><rect x="5.8" y="6.5" width="7.7" height="7.7" rx=".8"/></g><path d="M7.8 9.2h4M7.8 11.4h4" stroke="#474747" stroke-width="1.2"/></svg>
<svg class="abs" style="left:240px;top:729px" width="16" height="16" viewBox="0 0 16 16" ><g fill="none" stroke="#474747" stroke-width="1.3"><path d="M5 3H3.2Q2.5 3 2.5 3.8V12.2Q2.5 13 3.2 13H5M10.5 3H12.3Q13 3 13 3.8V5.5"/><rect x="6" y="1.5" width="3.5" height="2.2" rx="1" fill="#474747"/><rect x="5.8" y="6.5" width="7.7" height="7.7" rx=".8"/></g><path d="M7.8 8.8h4M9.8 8.8v4" stroke="#474747" stroke-width="1.2"/></svg>
<svg class="abs" style="left:263px;top:729px" width="16" height="16" viewBox="0 0 16 16" ><g fill="none" stroke="#474747" stroke-width="1.3"><path d="M5 3H3.2Q2.5 3 2.5 3.8V12.2Q2.5 13 3.2 13H5M10.5 3H12.3Q13 3 13 3.8V5.5"/><rect x="6" y="1.5" width="3.5" height="2.2" rx="1" fill="#474747"/><rect x="5.8" y="6.5" width="7.7" height="7.7" rx=".8"/></g><path d="M7.8 8.5v4.2l2-1.6 2 1.6V8.5" fill="none" stroke="#474747" stroke-width="1.1"/></svg>
<svg class="abs" style="left:290px;top:729px" width="16" height="16" viewBox="0 0 16 16" ><path d="M7 3.5L2.5 7.5L7 11.5V9Q11 8.5 13.5 12Q13 6 7 5.8Z" fill="#c4c4c4"/></svg>
<svg class="abs" style="left:313px;top:729px" width="16" height="16" viewBox="0 0 16 16" ><path d="M9 3.5L13.5 7.5L9 11.5V9Q5 8.5 2.5 12Q3 6 9 5.8Z" fill="#c4c4c4"/></svg>
<svg class="abs" style="left:340px;top:728px" width="24" height="17" viewBox="0 0 24 17" ><text x="2" y="9" font-family="Liberation Sans" font-size="8" font-weight="700" fill="#474747" textLength="11" lengthAdjust="spacingAndGlyphs">ABC</text><path d="M5 10.5L7.5 13.5L13 8.5" fill="none" stroke="#474747" stroke-width="1.8"/><path d="M17 8.2h5l-2.5 2.6Z" fill="#474747"/></svg>
<svg class="abs" style="left:374px;top:729px" width="16" height="16" viewBox="0 0 16 16" ><g fill="none" stroke="#474747" stroke-width="1.6"><rect x="2.2" y="5" width="11.6" height="5.6" rx="2.8"/><path d="M5.5 7.8h5"/></g></svg>
<svg class="abs" style="left:397px;top:729px" width="16" height="16" viewBox="0 0 16 16" ><g fill="none" stroke="#c4c4c4" stroke-width="1.4"><path d="M9 10.5H5Q2.5 10.5 2.5 8Q2.5 5.5 5 5.5H11Q13.5 5.5 13.5 8"/><path d="M6 8h4M10 10l3.5 3.5M13.5 10L10 13.5"/></g></svg>
<svg class="abs" style="left:420px;top:729px" width="16" height="16" viewBox="0 0 16 16" ><path d="M3.2 2v13" stroke="#474747" stroke-width="1.3"/><path d="M3.8 2.5Q6 1.5 8.5 2.8Q11 3.8 13.5 2.8V10Q11 11 8.5 9.8Q6 8.5 3.8 9.5Z" fill="#474747"/></svg>
<svg class="abs" style="left:447px;top:729px" width="16" height="16" viewBox="0 0 16 16" ><rect x="2.5" y="3.5" width="11" height="9.5" fill="none" stroke="#474747" stroke-width="1.3"/><path d="M3 12.5L6.5 8.5L9 10.5L11 9L13 12.5Z" fill="#474747"/><circle cx="5.5" cy="6.2" r="1" fill="#474747"/></svg>
<svg class="abs" style="left:470px;top:729px" width="16" height="16" viewBox="0 0 16 16" ><rect x="1.8" y="2.5" width="12.5" height="11" fill="none" stroke="#474747" stroke-width="1.2"/><rect x="1.8" y="2.5" width="12.5" height="2.5" fill="#474747"/><path d="M6 5v8.5M10.1 5v8.5M1.8 9.2h12.5" stroke="#474747" stroke-width="1.2"/></svg>
<svg class="abs" style="left:493px;top:729px" width="16" height="16" viewBox="0 0 16 16" ><path d="M2.5 1.5h11M2.5 3.7h11M2.5 12h11M2.5 14.2h11" stroke="#9a9a9a" stroke-width=".9"/><path d="M2.5 7.8h11" stroke="#474747" stroke-width="2"/></svg>
<svg class="abs" style="left:517px;top:728px" width="16" height="17" viewBox="0 0 16 17" ><text x="8" y="14.5" text-anchor="middle" font-family="Liberation Serif" font-size="16.5" fill="#474747">&#937;</text></svg>
<svg class="abs" style="left:544px;top:729px" width="16" height="16" viewBox="0 0 16 16" ><g fill="#474747"><path d="M1.8 1.8h5.2l-5.2 5.2Z"/><path d="M14.2 1.8h-5.2l5.2 5.2Z"/><path d="M1.8 14.2h5.2l-5.2-5.2Z"/><path d="M14.2 14.2h-5.2l5.2-5.2Z"/></g><g stroke="#474747" stroke-width="1.6"><path d="M3.5 3.5L6.5 6.5M12.5 3.5L9.5 6.5M3.5 12.5L6.5 9.5M12.5 12.5L9.5 9.5"/></g></svg>
<svg class="abs" style="left:570px;top:729px" width="16" height="16" viewBox="0 0 16 16" ><path d="M3.5 2h6l3.5 3.5V14.5h-9.5Z" fill="none" stroke="#474747" stroke-width="1.1"/><path d="M7.3 7.5L5.8 9.3L7.3 11M9 7.5L10.5 9.3L9 11" fill="none" stroke="#474747" stroke-width=".9"/></svg>
<div class="t" style="left:588.8px;top:731.5px;font-size:10px;line-height:10px;color:#474747;font-weight:400;letter-spacing:-0.15px;">Source</div>
<svg class="abs" style="left:172px;top:755px" width="14" height="16" viewBox="0 0 14 16" ><text x="2.5" y="13.8" font-family="Liberation Sans" font-size="12.5" font-weight="700" fill="#474747">B</text></svg>
<svg class="abs" style="left:195px;top:755px" width="14" height="16" viewBox="0 0 14 16" ><text x="2.3" y="13.8" font-family="Liberation Serif" font-size="14" font-style="italic" font-weight="700" fill="#474747">I</text></svg>
<svg class="abs" style="left:217px;top:755px" width="16" height="16" viewBox="0 0 16 16" ><text x="3" y="13.8" font-family="Liberation Sans" font-size="12.5" font-weight="700" fill="#474747">S</text><path d="M2 9.5h12" stroke="#474747" stroke-width="1.2"/></svg>
<svg class="abs" style="left:244px;top:755px" width="16" height="17" viewBox="0 0 16 17" ><text x="2.5" y="12.3" font-family="Liberation Serif" font-size="12" font-style="italic" font-weight="700" fill="#474747">T</text><path d="M2.5 14.3h7" stroke="#474747" stroke-width="1"/><path d="M9.5 11.5L13.5 15.5M13.5 11.5L9.5 15.5" stroke="#474747" stroke-width="1.2"/></svg>
<svg class="abs" style="left:271px;top:756px" width="16" height="16" viewBox="0 0 16 16" ><path d="M7 4.8h7M7 8h7M7 11.5h7M7 13h7" stroke="#474747" stroke-width="1.3"/><text x="2.5" y="8" font-family="Liberation Sans" font-size="5.5" font-weight="700" fill="#474747">1</text><text x="2.5" y="14.5" font-family="Liberation Sans" font-size="5.5" font-weight="700" fill="#474747">2</text></svg>
<svg class="abs" style="left:295px;top:756px" width="16" height="16" viewBox="0 0 16 16" ><circle cx="3.8" cy="5.5" r="1.6" fill="#474747"/><circle cx="3.8" cy="11.5" r="1.6" fill="#474747"/><path d="M7 4.5h7M7 6.8h7M7 10.5h7M7 12.8h7" stroke="#474747" stroke-width="1.2"/></svg>
<svg class="abs" style="left:322px;top:756px" width="16" height="16" viewBox="0 0 16 16" ><path d="M8.5 3.5v10M10.5 4.5h4M10.5 7h4M10.5 9.5h4M10.5 12h4" stroke="#c4c4c4" stroke-width="1"/><path d="M7 8.5H2M4 6.5L2 8.5L4 10.5" fill="none" stroke="#c4c4c4" stroke-width="1"/></svg>
<svg class="abs" style="left:345px;top:756px" width="16" height="16" viewBox="0 0 16 16" ><path d="M8.5 3v11" stroke="#474747" stroke-width="1.3"/><path d="M10.5 4.5h4M10.5 7h4M10.5 9.5h4M10.5 12h4" stroke="#474747" stroke-width="1.1"/><path d="M1.5 8.5h5.5M5 6.5L7 8.5L5 10.5" fill="none" stroke="#474747" stroke-width="1.1"/></svg>
<svg class="abs" style="left:372px;top:757px" width="16" height="16" viewBox="0 0 16 16" ><path d="M5.3 6.5a2.6 2.6 0 1 0 -1 2.3q-.2 2.2 -2.2 3.9l.8 .6q3.5 -2.3 3.2 -6.2Z" fill="#474747"/><path d="M12.3 6.5a2.6 2.6 0 1 0 -1 2.3q-.2 2.2 -2.2 3.9l.8 .6q3.5 -2.3 3.2 -6.2Z" fill="#474747"/></svg>
<div class="t" style="left:405.0px;top:760.1px;font-size:10.3px;line-height:10.3px;color:#474747;font-weight:400;letter-spacing:-0.1px;">Styles</div>
<svg class="abs" style="left:461px;top:761px" width="8" height="5" viewBox="0 0 8 5" ><path d="M0.5 0.5h6l-3 3Z" fill="#474747"/></svg>
<div class="t" style="left:485.3px;top:760.1px;font-size:10.3px;line-height:10.3px;color:#474747;font-weight:400;letter-spacing:-0.15px;">Format</div>
<svg class="abs" style="left:541px;top:761px" width="8" height="5" viewBox="0 0 8 5" ><path d="M0.5 0.5h6l-3 3Z" fill="#474747"/></svg>
<div class="t" style="left:563.8px;top:757.1px;font-size:15.5px;line-height:15.5px;color:#333;font-weight:700;letter-spacing:0px;">?</div>
<div class="t" style="left:172.9px;top:791.3px;font-size:8.2px;line-height:8.2px;color:#4a4a4a;font-weight:400;letter-spacing:0.03px;">Dear Parents,</div>
<div class="t" style="left:172.9px;top:812.1px;font-size:8.2px;line-height:8.2px;color:#4a4a4a;font-weight:400;letter-spacing:0.03px;">Please note that there will be a short class activity session tomorrow focused on creative learning and interaction.</div>
<div class="t" style="left:172.9px;top:822.9px;font-size:8.2px;line-height:8.2px;color:#4a4a4a;font-weight:400;letter-spacing:0.03px;">Kindly ensure your child carries all required materials.</div>
<div class="t" style="left:172.9px;top:844.1px;font-size:8.2px;line-height:8.2px;color:#4a4a4a;font-weight:400;letter-spacing:0.03px;">Looking forward to an engaging session.</div>
<div class="t" style="left:172.9px;top:864.9px;font-size:8.2px;line-height:8.2px;color:#4a4a4a;font-weight:400;letter-spacing:0.03px;">Regards,</div>
<div class="t" style="left:172.9px;top:875.2px;font-size:8.2px;line-height:8.2px;color:#4a4a4a;font-weight:400;letter-spacing:0.03px;">School Administration</div>
<div class="abs" style="left:1182px;top:824px;width:111px;height:40px;background:#5d87ff;border-radius:7px"></div>
<svg class="abs" style="left:1202px;top:837px" width="13" height="13" viewBox="0 0 13 13" ><path d="M6.5 1v11M1 6.5h11" stroke="#fff" stroke-width="1.6"/></svg>
<div class="t" style="left:1225.9px;top:837.0px;font-size:16px;line-height:16px;color:#fff;font-weight:400;letter-spacing:0.1px;">Create</div>

</body></html>
